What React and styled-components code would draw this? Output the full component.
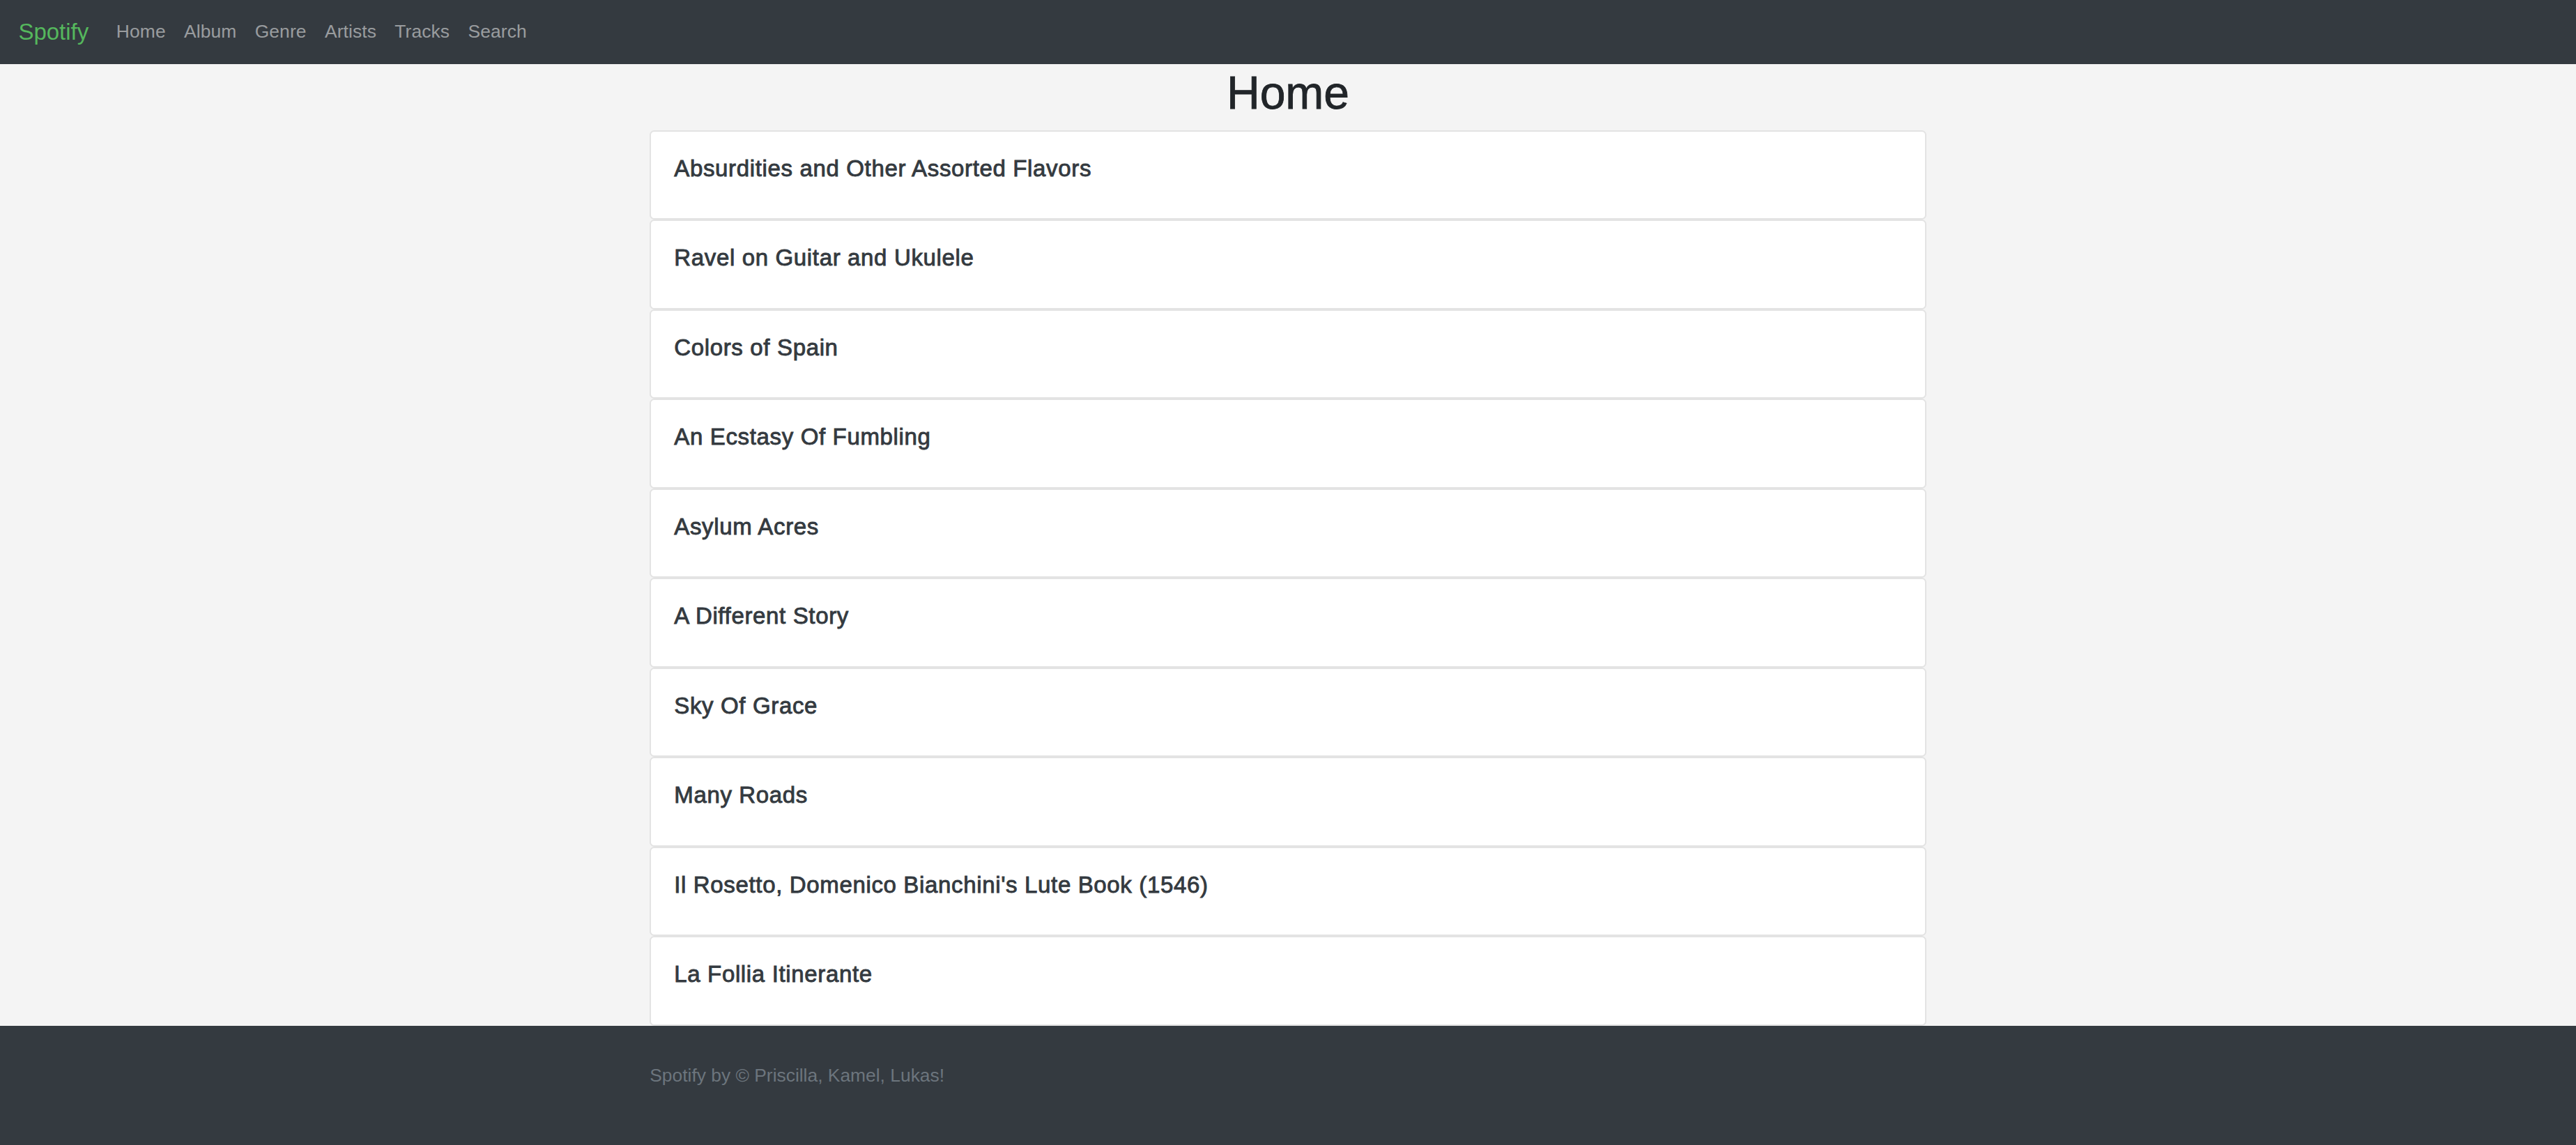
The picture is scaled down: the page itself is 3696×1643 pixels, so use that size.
import React from 'react';
import styled, { createGlobalStyle } from 'styled-components';

// the reference was taken at a 1.65 zoom, so 1rem = 16 * 1.65
const GlobalStyle = createGlobalStyle`
    html {
        font-size: 26.4px;
    }
    body {
        margin: 0;
        background: #f4f4f4;
        color: #212529;
        font-family: "Liberation Sans", Helvetica, Arial, sans-serif;
        font-size: 1rem;
        line-height: 1.5;
    }
    * {
        box-sizing: border-box;
    }
`

const Page = styled.div`
    min-height: 100vh;
    display: flex;
    flex-direction: column;
`
const Navbar = styled.nav`
    display: flex;
    align-items: center;
    padding: 0.5rem 1rem;
    background: #343a40;
`
const Brand = styled.a`
    padding: 0.3125rem 0;
    margin-right: 1rem;
    font-size: 1.25rem;
    line-height: 1.5;
    color: #55b85d;
    text-decoration: none;
    white-space: nowrap;
`
const NavList = styled.ul`
    display: flex;
    list-style: none;
    margin: 0;
    padding: 0;
`
const NavLink = styled.a`
    display: block;
    padding: 0.5rem;
    color: rgba(255, 255, 255, 0.5);
    letter-spacing: 0.1px;
    text-decoration: none;
`
const Main = styled.main`
    width: 100%;
    max-width: calc(1140 * 1.65px);
    margin: 0 auto;
    padding: 0 calc(15 * 1.65px);
`
const Title = styled.h1`
    margin: 0 0 0.5rem;
    padding-top: 2px;
    text-align: center;
    font-size: 2.5rem;
    font-weight: 500;
    line-height: 1.2;
    color: #212529;
    -webkit-text-stroke: 0.8px #212529;
`
const Card = styled.div`
    background: #fff;
    border: 2px solid rgba(0, 0, 0, 0.11);
    border-radius: 0.25rem;
`
const CardBody = styled.div`
    padding: 1.25rem;
`
const CardTitle = styled.h5`
    margin: 0 0 calc(0.75rem - 0.9px);
    font-size: 1.25rem;
    font-weight: 500;
    line-height: 1.2;
    letter-spacing: 0.65px;
    color: #343a40;
    -webkit-text-stroke: 0.9px #343a40;
`
const Footer = styled.footer`
    flex: 1;
    background: #343a40;
    padding: 2rem 0;
`
const FooterInner = styled.div`
    max-width: calc(1140 * 1.65px);
    margin: 0 auto;
    padding: 0 calc(15 * 1.65px);
    color: #6c757d;
`

const links = ['Home', 'Album', 'Genre', 'Artists', 'Tracks', 'Search'];

const albums = [
    'Absurdities and Other Assorted Flavors',
    'Ravel on Guitar and Ukulele',
    'Colors of Spain',
    'An Ecstasy Of Fumbling',
    'Asylum Acres',
    'A Different Story',
    'Sky Of Grace',
    'Many Roads',
    "Il Rosetto, Domenico Bianchini's Lute Book (1546)",
    'La Follia Itinerante'
];

const App = () => (
    <Page>
        <GlobalStyle />
        <Navbar>
            <Brand href="#">Spotify</Brand>
            <NavList>
                {links.map(link => (
                    <li key={link}>
                        <NavLink href="#">{link}</NavLink>
                    </li>
                ))}
            </NavList>
        </Navbar>
        <Main>
            <Title>Home</Title>
            {albums.map(album => (
                <Card key={album}>
                    <CardBody>
                        <CardTitle>{album}</CardTitle>
                    </CardBody>
                </Card>
            ))}
        </Main>
        <Footer>
            <FooterInner>Spotify by © Priscilla, Kamel, Lukas!</FooterInner>
        </Footer>
    </Page>
)

export default App;
